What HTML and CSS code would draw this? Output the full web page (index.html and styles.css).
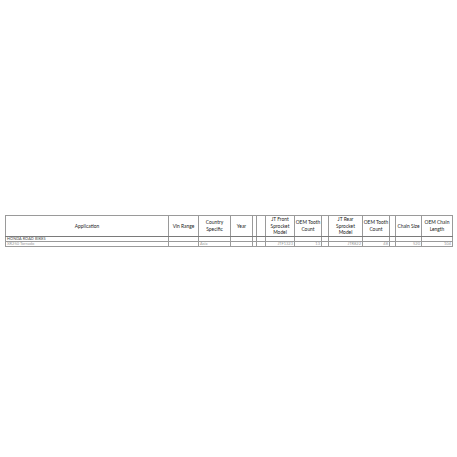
FILE: index.html
```html
<!DOCTYPE html>
<html>
<head>
<meta charset="utf-8">
<link rel="stylesheet" href="styles.css">
</head>
<body>
<div class="sheet">
<table class="grid">
<colgroup>
<col style="width:163px"><col style="width:30px"><col style="width:32px"><col style="width:22px"><col style="width:4px"><col style="width:9px"><col style="width:29px"><col style="width:27px"><col style="width:7px"><col style="width:34px"><col style="width:27px"><col style="width:6px"><col style="width:26px"><col style="width:31px">
</colgroup>
<thead>
<tr class="head">
<th>Application</th>
<th>Vin Range</th>
<th>Country<br>Specific</th>
<th>Year</th>
<th></th>
<th></th>
<th>JT Front<br>Sprocket<br>Model</th>
<th>OEM Tooth<br>Count</th>
<th></th>
<th>JT Rear<br>Sprocket<br>Model</th>
<th>OEM Tooth<br>Count</th>
<th></th>
<th>Chain Size</th>
<th>OEM Chain<br>Length</th>
</tr>
</thead>
<tbody>
<tr class="group">
<td class="title">HONDA ROAD BIKES</td>
<td></td><td></td><td></td><td></td><td></td><td></td><td></td><td></td><td></td><td></td><td></td><td></td><td></td>
</tr>
<tr class="item">
<td class="name">XR250 Tornado</td>
<td></td>
<td class="lt">Asia</td>
<td></td><td></td><td></td>
<td class="num">JTF1323</td>
<td class="num">13</td>
<td></td>
<td class="num">JTR822</td>
<td class="num">48</td>
<td></td>
<td class="num">520</td>
<td class="num">104</td>
</tr>
</tbody>
</table>
</div>
</body>
</html>
```
FILE: styles.css
```css
html, body {
  margin: 0;
  padding: 0;
  background: #ffffff;
}
.sheet {
  padding: 215px 5px 0 5px;
}
.grid {
  width: 447px;
  table-layout: fixed;
  border-collapse: collapse;
  font-family: Lato, "Liberation Sans", sans-serif;
  font-size: 4.9px;
  color: #222222;
}
.grid th, .grid td {
  border: 1px solid #9a9a9a;
  padding: 0;
  overflow: hidden;
  white-space: nowrap;
}
.grid th {
  font-weight: normal;
  text-align: center;
  vertical-align: middle;
  line-height: 6.5px;
}
.head {
  height: 20px;
}
.grid thead th {
  border-bottom: 1px solid #7a7a7a;
}
.group td {
  height: 4px;
  line-height: 4px;
}
.item td {
  height: 4px;
  line-height: 4px;
  color: #9a9a9a;
  font-size: 4px;
}
.title {
  color: #444444;
  font-size: 3.8px;
  letter-spacing: 0.1px;
  padding-left: 1px !important;
}
.name {
  padding-left: 1px !important;
}
.lt {
  text-align: left;
  padding-left: 1px !important;
}
.num {
  text-align: right;
  padding-right: 1px !important;
}
```
